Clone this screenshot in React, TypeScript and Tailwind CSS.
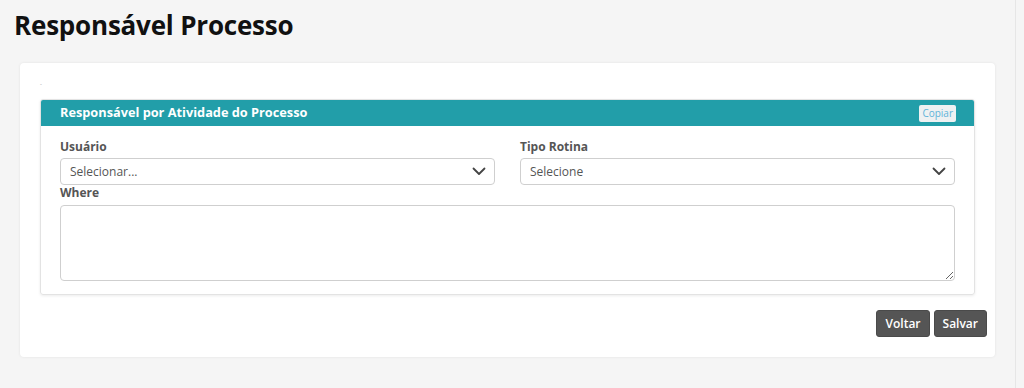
import React from 'react';

function Chevron() {
  return (
    <svg width="14" height="9" viewBox="0 0 14 9" fill="none" className="shrink-0">
      <path d="M1.5 1.5 L7 7 L12.5 1.5" stroke="#444" strokeWidth="1.8" strokeLinecap="round" strokeLinejoin="round" />
    </svg>
  );
}

function SelectBox({ placeholder }: { placeholder: string }) {
  return (
    <div className="h-[27px] flex items-center justify-between border border-[#cfcfcf] rounded-[4px] bg-white pl-[9px] pr-[8px]">
      <span className="text-[12px] text-[#555]">{placeholder}</span>
      <Chevron />
    </div>
  );
}

export default function App() {
  return (
    <div
      className="w-[1024px] h-[388px] bg-[#f5f5f5] overflow-hidden"
      style={{ fontFamily: '"Open Sans", "Noto Sans", sans-serif' }}
    >
      <div className="w-[1016px] h-full border-r border-[#e6e6e6]">
        <h1 className="pl-[14px] pt-[6px] text-[26px] leading-[38px] font-bold text-[#111] tracking-[-0.2px]">
          Responsável Processo
        </h1>

        <div className="ml-[20px] mt-[19px] w-[975px] bg-white rounded-[4px] shadow-[0_0_3px_rgba(0,0,0,0.08)] px-[20px] pt-[18px] pb-[20px]">
          <div className="h-[18px] text-[6px] text-[#999] leading-none">-</div>

          <div className="border border-[#e3e3e3] rounded-[3px] shadow-[0_1px_3px_rgba(0,0,0,0.08)]">
            <div className="h-[26px] bg-[#229ea9] rounded-t-[2px] flex items-center justify-between pl-[19px] pr-[18px]">
              <span className="text-[12.75px] font-bold text-white">Responsável por Atividade do Processo</span>
              <button className="h-[17px] px-[3px] bg-[#eef1f2] rounded-[2px] text-[10px] text-[#5fb3d9] leading-none">
                Copiar
              </button>
            </div>

            <div className="px-[19px] pt-[11px] pb-[13px]">
              <div className="grid grid-cols-2 gap-x-[25px]">
                <div>
                  <div className="text-[12px] font-bold text-[#555] leading-[20px] mb-[1px]">Usuário</div>
                  <SelectBox placeholder="Selecionar..." />
                </div>
                <div>
                  <div className="text-[12px] font-bold text-[#555] leading-[20px] mb-[1px]">Tipo Rotina</div>
                  <SelectBox placeholder="Selecione" />
                </div>
              </div>

              <div className="text-[12px] font-bold text-[#555] leading-[16px] mb-[4px]">Where</div>
              <textarea className="block w-full h-[76px] border border-[#cfcfcf] rounded-[4px] bg-white resize-y outline-none" />
            </div>
          </div>

          <div className="flex justify-end gap-[4px] mt-[15px] mr-[-12px]">
            <button className="h-[27px] px-[8px] bg-[#555] rounded-[3px] text-[12px] font-semibold text-white border border-[#4a4a4a]">
              Voltar
            </button>
            <button className="h-[27px] px-[8px] bg-[#555] rounded-[3px] text-[12px] font-semibold text-white border border-[#4a4a4a]">
              Salvar
            </button>
          </div>
        </div>
      </div>
    </div>
  );
}
